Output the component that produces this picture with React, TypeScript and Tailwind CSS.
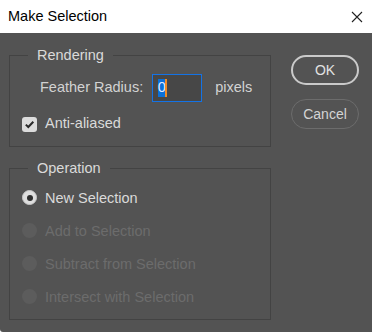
import React from "react";

const font = { fontFamily: '"Liberation Sans", Arial, sans-serif' };

function Radio({ label, checked, disabled }: { label: string; checked?: boolean; disabled?: boolean }) {
  return (
    <div className="flex h-[33px] items-center pl-[12px]">
      {disabled ? (
        <span className="h-[15px] w-[15px] rounded-full bg-[#5c5c5c]" />
      ) : (
        <span className="flex h-[15px] w-[15px] items-center justify-center rounded-full border border-[#c8c8c8] bg-[#dedede]">
          {checked && <span className="h-[6px] w-[6px] rounded-full bg-[#2e2e2e]" />}
        </span>
      )}
      <span className={`ml-[8px] text-[14.5px] leading-[20px] ${disabled ? "text-[#6c6c6c]" : "text-[#dadada]"}`}>{label}</span>
    </div>
  );
}

export default function App() {
  return (
    <div className="h-[332px] w-[372px] bg-white" style={font}>
      <div className="flex h-[33px] items-center justify-between bg-white pl-[8px] pr-[8px]">
        <span className="text-[14.5px] text-black">Make Selection</span>
        <svg width="12" height="12" viewBox="0 0 12 12" className="mr-[1px]">
          <path d="M1 1 L11 11 M11 1 L1 11" stroke="#222" strokeWidth="1.1" fill="none" />
        </svg>
      </div>
      <div className="flex h-[299px] rounded-bl-[3px] bg-[#535353]">
        <div className="ml-[9px] flex w-[262px] flex-col pt-[12px]">
          <fieldset className="min-w-0 border border-[#434343] pb-[12px] pt-[9px]">
            <legend className="ml-[18px] px-[9px] text-[14.5px] leading-[20px] text-[#dadada]">Rendering</legend>
            <div className="flex h-[28px] items-center pl-[30px]">
              <span className="text-[14.5px] text-[#d2d2d2]">Feather Radius:</span>
              <div className="ml-[9px] flex h-[28px] w-[50px] items-center border border-[#1473e6] bg-[#474747] pl-[5px]">
                <span className="flex h-[18px] w-[7px] items-center justify-center bg-[#0b70d8] text-[14.5px] text-[#dfe8ff]">0</span>
                <span className="h-[18px] w-[2px] bg-[#f08a24]" />
              </div>
              <span className="ml-[13px] text-[14.5px] text-[#d2d2d2]">pixels</span>
            </div>
            <div className="mt-[12px] flex h-[20px] items-center pl-[12px]">
              <span className="flex h-[15px] w-[15px] items-center justify-center rounded-[3px] bg-[#dcdcdc]">
                <svg width="11" height="11" viewBox="0 0 11 11">
                  <path d="M1.8 5.6 L4.3 8 L9.3 2.8" stroke="#2a2a2a" strokeWidth="2" fill="none" />
                </svg>
              </span>
              <span className="ml-[8px] text-[14.5px] text-[#dadada]">Anti-aliased</span>
            </div>
          </fieldset>
          <fieldset className="mt-[11px] min-w-0 border border-[#434343] pb-[6px] pt-[3px]">
            <legend className="ml-[18px] px-[9px] text-[14.5px] leading-[20px] text-[#dadada]">Operation</legend>
            <Radio label="New Selection" checked />
            <Radio label="Add to Selection" disabled />
            <Radio label="Subtract from Selection" disabled />
            <Radio label="Intersect with Selection" disabled />
          </fieldset>
        </div>
        <div className="ml-[20px] flex flex-col gap-[14px] pt-[22px]">
          <button className="flex h-[30px] w-[68px] items-center justify-center rounded-full border-2 border-[#cacaca] text-[14px] text-[#e2e2e2]">OK</button>
          <button className="flex h-[30px] w-[68px] items-center justify-center rounded-full border border-[#6c6c6c] text-[14px] text-[#d4d4d4]">Cancel</button>
        </div>
      </div>
    </div>
  );
}
